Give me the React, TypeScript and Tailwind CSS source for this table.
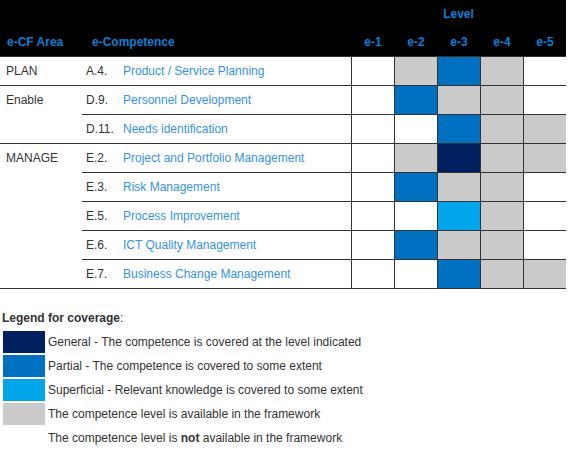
import React from "react";

type Fill = "w" | "g" | "b" | "n" | "s";

type Row = {
  area: string;
  code: string;
  name: string;
  levels: Fill[];
  groupEnd: boolean;
};

const rows: Row[] = [
  { area: "PLAN", code: "A.4.", name: "Product / Service Planning", levels: ["w", "g", "b", "g", "w"], groupEnd: true },
  { area: "Enable", code: "D.9.", name: "Personnel Development", levels: ["w", "b", "g", "g", "w"], groupEnd: false },
  { area: "", code: "D.11.", name: "Needs identification", levels: ["w", "w", "b", "g", "g"], groupEnd: true },
  { area: "MANAGE", code: "E.2.", name: "Project and Portfolio Management", levels: ["w", "g", "n", "g", "g"], groupEnd: false },
  { area: "", code: "E.3.", name: "Risk Management", levels: ["w", "b", "g", "g", "w"], groupEnd: false },
  { area: "", code: "E.5.", name: "Process Improvement", levels: ["w", "w", "s", "g", "w"], groupEnd: false },
  { area: "", code: "E.6.", name: "ICT Quality Management", levels: ["w", "b", "g", "g", "w"], groupEnd: false },
  { area: "", code: "E.7.", name: "Business Change Management", levels: ["w", "w", "b", "g", "g"], groupEnd: true },
];

const fillClass: Record<Fill, string> = {
  w: "bg-white",
  g: "bg-[#cbcbcb]",
  b: "bg-[#0070c0]",
  n: "bg-[#002060]",
  s: "bg-[#00a6e9]",
};

const levels = ["e-1", "e-2", "e-3", "e-4", "e-5"];

const legend: { fill: Fill | null; text: React.ReactNode }[] = [
  { fill: "n", text: "General - The competence is covered at the level indicated" },
  { fill: "b", text: "Partial - The competence is covered to some extent" },
  { fill: "s", text: "Superficial - Relevant knowledge is covered to some extent" },
  { fill: "g", text: "The competence level is available in the framework" },
  {
    fill: null,
    text: (
      <>
        The competence level is <span className="font-bold">not</span> available in the framework
      </>
    ),
  },
];

export default function App() {
  return (
    <div className="w-[568px] h-[453px] bg-white text-[12px] text-[#333] font-['Liberation_Sans',Arial,sans-serif]">
      <div className="w-[566px]">
        {/* header */}
        <div className="h-[57px] bg-black border-b border-[#333] font-bold text-[#0c7fd6]">
          <div className="flex h-[28px] items-center">
            <div className="w-[437px]" />
            <div className="w-[43px] text-center">Level</div>
          </div>
          <div className="flex h-[28px] items-center">
            <div className="w-[82px] pl-[7px]">e-CF Area</div>
            <div className="w-[269px] pl-[10px]">e-Competence</div>
            {levels.map((level) => (
              <div key={level} className="w-[43px] pl-px text-center">
                {level}
              </div>
            ))}
          </div>
        </div>

        {/* rows */}
        {rows.map((row) => (
          <div key={row.code} className="flex h-[29px]">
            <div
              className={`w-[82px] border-b pl-[6px] flex items-center ${row.groupEnd ? "border-[#333]" : "border-transparent"}`}
            >
              {row.area}
            </div>
            <div className="flex w-[484px] border-b border-[#333]">
              <div className="w-[41px] flex items-center pl-[4px]">{row.code}</div>
              <div className="w-[228px] flex items-center text-[#3592e8]">{row.name}</div>
              {row.levels.map((fill, i) => (
                <div key={i} className="w-[43px] border-l border-[#333] bg-white">
                  <div className={`h-full w-full ${fillClass[fill]}`} />
                </div>
              ))}
            </div>
          </div>
        ))}
      </div>

      {/* legend */}
      <div className="mt-[22px] pl-[2px] leading-[14px]">
        <span className="font-bold">Legend for coverage</span>:
      </div>
      <div className="mt-[6px] flex flex-col gap-[2px]">
        {legend.map((item, i) => (
          <div key={i} className="flex h-[22px] items-center">
            <div className={`ml-[3px] h-[22px] w-[42px] ${item.fill ? fillClass[item.fill] : ""}`} />
            <div className="ml-[3px]">{item.text}</div>
          </div>
        ))}
      </div>
    </div>
  );
}
